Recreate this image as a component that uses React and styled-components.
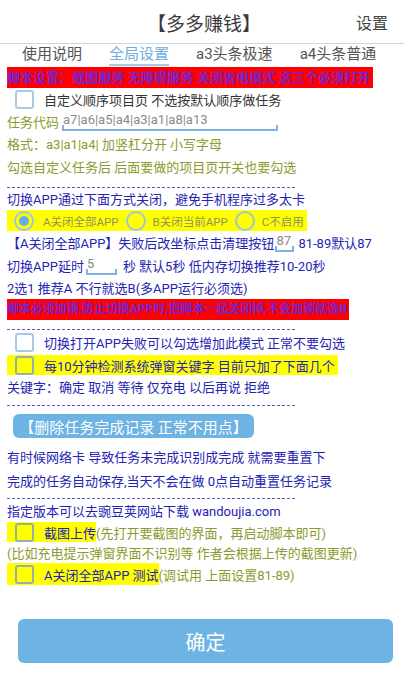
import styled, { createGlobalStyle } from "styled-components";

const GlobalStyle = createGlobalStyle`
  html, body {
    margin: 0;
    padding: 0;
    background: #fff;
  }
`;

const BLUE = "#2424b4";
const OLIVE = "#8d9a2e";
const FIELD = "#7fb3e2";

const Page = styled.div`
  width: 408px;
  height: 676px;
  display: flex;
  flex-direction: column;
  background: #fff;
  font-family: Roboto, "Noto Sans CJK SC", sans-serif;
  overflow: hidden;
`;

const Header = styled.div`
  height: 43px;
  display: grid;
  grid-template-columns: 1fr auto 1fr;
  align-items: center;
`;

const Title = styled.div`
  grid-column: 2;
  font-size: 19px;
  color: #3a3a3a;
  padding-top: 1px;
`;

const HeaderAction = styled.div`
  justify-self: end;
  padding-right: 20px;
  font-size: 16px;
  color: #444;
`;

const Divider = styled.div`
  height: 1px;
  margin-right: 4px;
  background: #d6d6d6;
`;

const Tabs = styled.div`
  height: 22px;
  display: flex;
  align-items: flex-end;
  gap: 27px;
  padding-left: 22px;
`;

const Tab = styled.div`
  font-size: 15px;
  line-height: 20px;
  color: ${(p) => (p.$active ? "#6aaee2" : "#555")};
  border-bottom: 2px solid ${(p) => (p.$active ? "#a9cbe8" : "transparent")};
`;

const Content = styled.div`
  display: flex;
  flex-direction: column;
  padding-left: 7px;
`;

const Banner = styled.div`
  align-self: flex-start;
  margin-top: ${(p) => p.$mt || 0}px;
  height: 21px;
  line-height: 21px;
  padding-right: 2px;
  background: #ff0000;
  color: #7424d4;
  font-weight: bold;
  font-size: ${(p) => p.$size}px;
  letter-spacing: ${(p) => p.$ls || 0}px;
  white-space: nowrap;
`;

const Line = styled.div`
  height: ${(p) => p.$h}px;
  margin-top: ${(p) => p.$mt || 0}px;
  display: flex;
  align-items: center;
  font-size: 13px;
  color: ${(p) => p.$color};
  white-space: nowrap;
`;

const Highlight = styled.div`
  align-self: flex-start;
  height: ${(p) => p.$h}px;
  margin-top: ${(p) => p.$mt || 0}px;
  display: flex;
  align-items: center;
  font-size: 13px;
  color: ${(p) => p.$color};
  white-space: nowrap;
`;

const Yellow = styled.span`
  display: flex;
  align-items: center;
  height: 100%;
  background: #ffff00;
  padding-right: ${(p) => p.$pr || 0}px;
  color: ${(p) => p.$color || "inherit"};
`;

const CheckBox = styled.span`
  box-sizing: border-box;
  width: 19px;
  height: 19px;
  margin: 0 10px 0 8px;
  border: 2px solid ${(p) => (p.$onYellow ? "#93b0ad" : "#a7c9e8")};
  border-radius: 3px;
  flex-shrink: 0;
`;

const Radio = styled.span`
  box-sizing: border-box;
  width: 20px;
  height: 20px;
  margin: 0 ${(p) => p.$gap}px 0 ${(p) => p.$left}px;
  border: 2px solid #9cc4e5;
  border-radius: 50%;
  display: flex;
  align-items: center;
  justify-content: center;
  flex-shrink: 0;

  &::after {
    content: "";
    width: 10px;
    height: 10px;
    border-radius: 50%;
    background: ${(p) => (p.$checked ? "#63aee6" : "transparent")};
  }
`;

const RadioLabel = styled.span`
  font-size: 11.5px;
  color: #939160;
`;

const Field = styled.span`
  position: relative;
  box-sizing: border-box;
  display: inline-block;
  width: ${(p) => p.$w}px;
  margin: 0 ${(p) => p.$mr || 3}px 0 ${(p) => p.$ml || 3}px;
  padding-left: 1px;
  height: 20px;
  line-height: 18px;
  color: #8a8a8a;
  font-size: 13px;
  border-bottom: 2px solid ${FIELD};

  &::before,
  &::after {
    content: "";
    position: absolute;
    bottom: 0;
    width: 2px;
    height: 4px;
    background: ${FIELD};
  }
  &::before {
    left: 0;
  }
  &::after {
    right: 0;
  }
`;

const Rule = styled.div`
  width: 288px;
  margin-top: ${(p) => p.$mt}px;
  border-top: 1px dashed #5a5ad4;
`;

const ActionButton = styled.button`
  align-self: flex-start;
  margin: ${(p) => p.$mt}px 0 0 ${(p) => p.$ml}px;
  width: ${(p) => p.$w}px;
  height: ${(p) => p.$h}px;
  border: none;
  border-radius: 6px;
  background: #6db3e3;
  color: #fff;
  font-family: inherit;
  font-size: ${(p) => p.$size}px;
  padding: 0;
  white-space: nowrap;
`;

export default function App() {
  return (
    <>
      <GlobalStyle />
      <Page>
        <Header>
          <Title>【多多赚钱】</Title>
          <HeaderAction>设置</HeaderAction>
        </Header>
        <Divider />
        <Tabs>
          <Tab>使用说明</Tab>
          <Tab $active>全局设置</Tab>
          <Tab>a3头条极速</Tab>
          <Tab>a4头条普通</Tab>
        </Tabs>

        <Content>
          <Banner $mt={1} $size={13} $ls={0.1}>
            脚本设置：截图服务 无障碍服务 关闭省电模式 这三个必须打开
          </Banner>

          <Line $h={22} $color="#333">
            <CheckBox />
            自定义顺序项目页 不选按默认顺序做任务
          </Line>
          <Line $h={22} $color={OLIVE}>
            任务代码
            <Field $w={216} $ml={3}>a7|a6|a5|a4|a3|a1|a8|a13</Field>
          </Line>
          <Line $h={23} $color={OLIVE}>
            格式：a3|a1|a4| 加竖杠分开 小写字母
          </Line>
          <Line $h={23} $color={OLIVE}>
            勾选自定义任务后 后面要做的项目页开关也要勾选
          </Line>

          <Rule $mt={9} />
          <Line $h={21} $color={BLUE}>
            切换APP通过下面方式关闭，避免手机程序过多太卡
          </Line>
          <Highlight $h={21} $mt={1}>
            <Yellow $pr={3}>
              <Radio $checked $left={7} $gap={9} />
              <RadioLabel>A关闭全部APP</RadioLabel>
              <Radio $left={7} $gap={7} />
              <RadioLabel>B关闭当前APP</RadioLabel>
              <Radio $left={7} $gap={7} />
              <RadioLabel>C不启用</RadioLabel>
            </Yellow>
          </Highlight>
          <Line $h={22} $color={BLUE}>
            【A关闭全部APP】失败后改坐标点击清理按钮
            <Field $w={19} $ml={1} $mr={4}>87</Field>
            81-89默认87
          </Line>
          <Line $h={24} $color={BLUE}>
            切换APP延时
            <Field $w={31} $ml={2} $mr={6}>5</Field>
            秒 默认5秒 低内存切换推荐10-20秒
          </Line>
          <Line $h={21} $color={BLUE}>
            2选1 推荐A 不行就选B(多APP运行必须选)
          </Line>
          <Banner $mt={1} $size={12}>
            脚本必须加锁,防止切换APP时,把脚本一起关闭掉,不会加锁就选B
          </Banner>

          <Rule $mt={9} />
          <Line $h={20} $mt={2} $color={BLUE}>
            <CheckBox />
            切换打开APP失败可以勾选增加此模式 正常不要勾选
          </Line>
          <Highlight $h={20} $mt={3} $color={BLUE}>
            <Yellow $pr={3}>
              <CheckBox $onYellow />
              每10分钟检测系统弹窗关键字 目前只加了下面几个
            </Yellow>
          </Highlight>
          <Line $h={22} $color={BLUE}>
            关键字：确定 取消 等待 仅充电 以后再说 拒绝
          </Line>

          <Rule $mt={8} />
          <ActionButton $mt={8} $ml={6} $w={241} $h={24} $size={15}>
            【删除任务完成记录 正常不用点】
          </ActionButton>
          <Line $h={22} $mt={7} $color={BLUE}>
            有时候网络卡 导致任务未完成识别成完成 就需要重置下
          </Line>
          <Line $h={22} $mt={2} $color={BLUE}>
            完成的任务自动保存,当天不会在做 0点自动重置任务记录
          </Line>

          <Rule $mt={7} />
          <Line $h={22} $color={BLUE}>
            指定版本可以去豌豆荚网站下载 wandoujia.com
          </Line>
          <Highlight $h={20} $mt={1} $color={OLIVE}>
            <Yellow $color={BLUE}>
              <CheckBox $onYellow />
              截图上传
            </Yellow>
            (先打开要截图的界面，再启动脚本即可)
          </Highlight>
          <Line $h={20} $color={OLIVE}>
            (比如充电提示弹窗界面不识别等 作者会根据上传的截图更新)
          </Line>
          <Highlight $h={22} $mt={1} $color={OLIVE}>
            <Yellow $color={BLUE}>
              <CheckBox $onYellow />
              A关闭全部APP 测试
            </Yellow>
            (调试用 上面设置81-89)
          </Highlight>

          <ActionButton $mt={34} $ml={11} $w={375} $h={44} $size={20}>
            确定
          </ActionButton>
        </Content>
      </Page>
    </>
  );
}
